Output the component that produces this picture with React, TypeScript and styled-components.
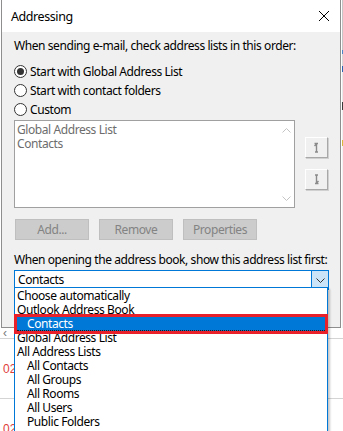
import { createGlobalStyle } from "styled-components";
import styled from "styled-components";

// ------ Global ------

const GlobalStyle = createGlobalStyle`
  html, body {
    margin: 0;
    padding: 0;
    background: #ffffff;
  }
  body {
    font-family: "Noto Sans", "Open Sans", sans-serif;
    font-size: 12px;
    letter-spacing: -0.42px;
    color: #000000;
  }
`;

// ------ Background (app behind the dialog) ------

const Screen = styled.div`
  position: relative;
  width: 343px;
  height: 431px;
  overflow: hidden;
  background: #ffffff;
`;

const TopRow = styled.div`
  display: flex;
  height: 328px;
`;

const SideStrip = styled.div`
  display: flex;
  flex-direction: column;
  width: 2px;
  margin-left: 1px;
`;

const StripPart = styled.div<{ $h: number; $c: string }>`
  height: ${(p) => p.$h}px;
  background: ${(p) => p.$c};
`;

const BgRows = styled.div`
  display: flex;
  flex-direction: column;
`;

const BgRow = styled.div<{ $h: number }>`
  height: ${(p) => p.$h}px;
  border-bottom: 1px solid #d4d4d4;
  box-sizing: border-box;
  display: flex;
  align-items: center;
  padding-left: 3px;
  font-family: "Liberation Sans", sans-serif;
  font-size: 12px;
  letter-spacing: 0;
  color: #e0403a;
`;

// ------ Dialog ------

const Dialog = styled.div`
  width: 340px;
  margin-left: 1px;
  box-sizing: border-box;
  border: 1px solid #8e8e8e;
  border-top: none;
  background: #f0f0f0;
  display: flex;
  flex-direction: column;
`;

const TitleBar = styled.div`
  height: 32px;
  background: #ffffff;
  display: flex;
  align-items: center;
  justify-content: space-between;
  padding: 0 10px 0 9px;
  font-size: 12.5px;
`;

const Body = styled.div`
  padding: 6px 12px 0 12px;
  display: flex;
  flex-direction: column;
`;

const Label = styled.div<{ $mt?: number }>`
  line-height: 16px;
  margin-top: ${(p) => p.$mt ?? 0}px;
  white-space: nowrap;
`;

const RadioGroup = styled.div`
  display: flex;
  flex-direction: column;
  margin-top: 8px;
`;

const RadioRow = styled.div`
  height: 19px;
  display: flex;
  align-items: center;
  gap: 3px;
`;

const RadioCircle = styled.span<{ $on?: boolean }>`
  width: 13px;
  height: 13px;
  box-sizing: border-box;
  border: 1px solid #333333;
  border-radius: 50%;
  background: #ffffff;
  display: flex;
  align-items: center;
  justify-content: center;
  &::after {
    content: "";
    width: 7px;
    height: 7px;
    border-radius: 50%;
    background: ${(p) => (p.$on ? "#333333" : "transparent")};
  }
`;

const ListRow = styled.div`
  display: flex;
  margin-top: 1px;
`;

const ListBox = styled.div`
  position: relative;
  width: 281px;
  height: 88px;
  box-sizing: border-box;
  border: 1px solid #a0a0a0;
  background: #ffffff;
  padding: 2px 0 0 2px;
`;

const ListText = styled.div`
  line-height: 14px;
  color: #6d6d6d;
`;

const ScrollCol = styled.div`
  position: absolute;
  top: 0;
  right: 0;
  bottom: 0;
  width: 16px;
  display: flex;
  flex-direction: column;
  justify-content: space-between;
  align-items: center;
  padding: 7px 0 6px 0;
`;

const MoveCol = styled.div`
  display: flex;
  flex-direction: column;
  gap: 11px;
  margin: 17px 0 0 10px;
`;

const MoveButton = styled.div`
  width: 23px;
  height: 21px;
  box-sizing: border-box;
  background: #f0f0f0;
  border: 1px solid #ffffff;
  border-right-color: #a8a8a8;
  border-bottom-color: #a8a8a8;
  box-shadow: 1px 1px 0 #d0d0d0;
  display: flex;
  align-items: center;
  justify-content: center;
`;

const ButtonRow = styled.div`
  display: flex;
  gap: 10px;
  margin: 11px 0 0 1px;
`;

const DisabledButton = styled.div`
  width: 74px;
  height: 21px;
  box-sizing: border-box;
  background: #cccccc;
  border: 1px solid #bfbfbf;
  color: #838383;
  display: flex;
  align-items: center;
  justify-content: center;
`;

const Combo = styled.div`
  display: flex;
  width: 315px;
  height: 20px;
  margin-top: 2px;
  box-sizing: border-box;
  border: 1px solid #0078d7;
  background: #ffffff;
`;

const ComboValue = styled.div`
  flex: 1;
  padding-left: 3px;
  line-height: 18px;
`;

const ComboArrow = styled.div`
  width: 16px;
  background: #cce4f7;
  border-left: 1px solid #0078d7;
  display: flex;
  align-items: center;
  justify-content: center;
`;

// ------ Dropdown list (overlay) ------

const DropList = styled.div`
  position: absolute;
  left: 14px;
  top: 287px;
  width: 314px;
  height: 160px;
  box-sizing: border-box;
  border: 1px solid #0078d7;
  background: #ffffff;
  padding: 1px 1px 0 1px;
  box-shadow: 2px 2px 2px rgba(0, 0, 0, 0.22);
`;

const DropItem = styled.div<{ $indent?: boolean; $selected?: boolean }>`
  height: 14px;
  line-height: 14px;
  padding-left: ${(p) => (p.$indent ? 11 : 1)}px;
  white-space: nowrap;
  ${(p) =>
    p.$selected &&
    `
    margin: 0 1px;
    padding-left: 10px;
    background: #0078d7;
    color: #ffffff;
    box-sizing: border-box;
    border-bottom: 1px dotted #1a1a1a;
    outline: 3px solid #e8202a;
    outline-offset: 0;
    position: relative;
  `}
`;

// ------ Icons ------

const CloseIcon = () => (
  <svg width="12" height="12" viewBox="0 0 12 12">
    <path d="M1 1 L11 11 M11 1 L1 11" stroke="#000" strokeWidth="1" />
  </svg>
);

const Chevron = ({ up, color }: { up?: boolean; color: string }) => (
  <svg width="9" height="5" viewBox="0 0 9 5">
    <path
      d={up ? "M0.5 4.5 L4.5 0.5 L8.5 4.5" : "M0.5 0.5 L4.5 4.5 L8.5 0.5"}
      stroke={color}
      strokeWidth="1"
      fill="none"
    />
  </svg>
);

const MoveIcon = ({ up }: { up?: boolean }) => (
  <svg width="7" height="11" viewBox="0 0 7 11">
    <g transform={up ? undefined : "rotate(180 3.5 5.5)"}>
      <path
        d="M1.5 1.5 H5 M3.5 1.5 V10 M2 10 H5 M1.5 4 L3.5 2"
        stroke="#8a8a8a"
        strokeWidth="1.4"
        fill="none"
      />
    </g>
  </svg>
);

// ------ App ------

const stripParts = [
  { h: 50, c: "#c6c6c6" },
  { h: 4, c: "#4a86c8" },
  { h: 12, c: "#d8d8d8" },
  { h: 6, c: "#2c63b0" },
  { h: 30, c: "#e8e8e8" },
  { h: 8, c: "#3a3a3a" },
  { h: 30, c: "#efefef" },
  { h: 6, c: "#d8b83a" },
  { h: 182, c: "#f2f2f2" },
];

const dropItems = [
  { t: "Choose automatically" },
  { t: "Outlook Address Book" },
  { t: "Contacts", sel: true },
  { t: "Global Address List" },
  { t: "All Address Lists" },
  { t: "All Contacts", ind: true },
  { t: "All Groups", ind: true },
  { t: "All Rooms", ind: true },
  { t: "All Users", ind: true },
  { t: "Public Folders", ind: true },
];

export default function App() {
  return (
    <Screen>
      <GlobalStyle />
      <TopRow>
        <Dialog>
          <TitleBar>
            <span>Addressing</span>
            <CloseIcon />
          </TitleBar>
          <Body>
            <Label>When sending e-mail, check address lists in this order:</Label>
            <RadioGroup>
              <RadioRow>
                <RadioCircle $on />
                <span>Start with Global Address List</span>
              </RadioRow>
              <RadioRow>
                <RadioCircle />
                <span>Start with contact folders</span>
              </RadioRow>
              <RadioRow>
                <RadioCircle />
                <span>Custom</span>
              </RadioRow>
            </RadioGroup>
            <ListRow>
              <ListBox>
                <ListText>Global Address List</ListText>
                <ListText>Contacts</ListText>
                <ScrollCol>
                  <Chevron up color="#c4c4c4" />
                  <Chevron color="#c4c4c4" />
                </ScrollCol>
              </ListBox>
              <MoveCol>
                <MoveButton>
                  <MoveIcon up />
                </MoveButton>
                <MoveButton>
                  <MoveIcon />
                </MoveButton>
              </MoveCol>
            </ListRow>
            <ButtonRow>
              <DisabledButton>Add...</DisabledButton>
              <DisabledButton>Remove</DisabledButton>
              <DisabledButton>Properties</DisabledButton>
            </ButtonRow>
            <Label $mt={12}>
              When opening the address book, show this address list first:
            </Label>
            <Combo>
              <ComboValue>Contacts</ComboValue>
              <ComboArrow>
                <Chevron color="#333333" />
              </ComboArrow>
            </Combo>
          </Body>
        </Dialog>
        <SideStrip>
          {stripParts.map((s, i) => (
            <StripPart key={i} $h={s.h} $c={s.c} />
          ))}
        </SideStrip>
      </TopRow>
      <BgRows>
        <BgRow $h={11}>
          <span style={{ color: "#777" }}>‹</span>
        </BgRow>
        <BgRow $h={60}>02</BgRow>
        <BgRow $h={60}>02</BgRow>
      </BgRows>
      <DropList>
        {dropItems.map((d) => (
          <DropItem key={d.t} $indent={d.ind} $selected={d.sel}>
            {d.t}
          </DropItem>
        ))}
      </DropList>
    </Screen>
  );
}
